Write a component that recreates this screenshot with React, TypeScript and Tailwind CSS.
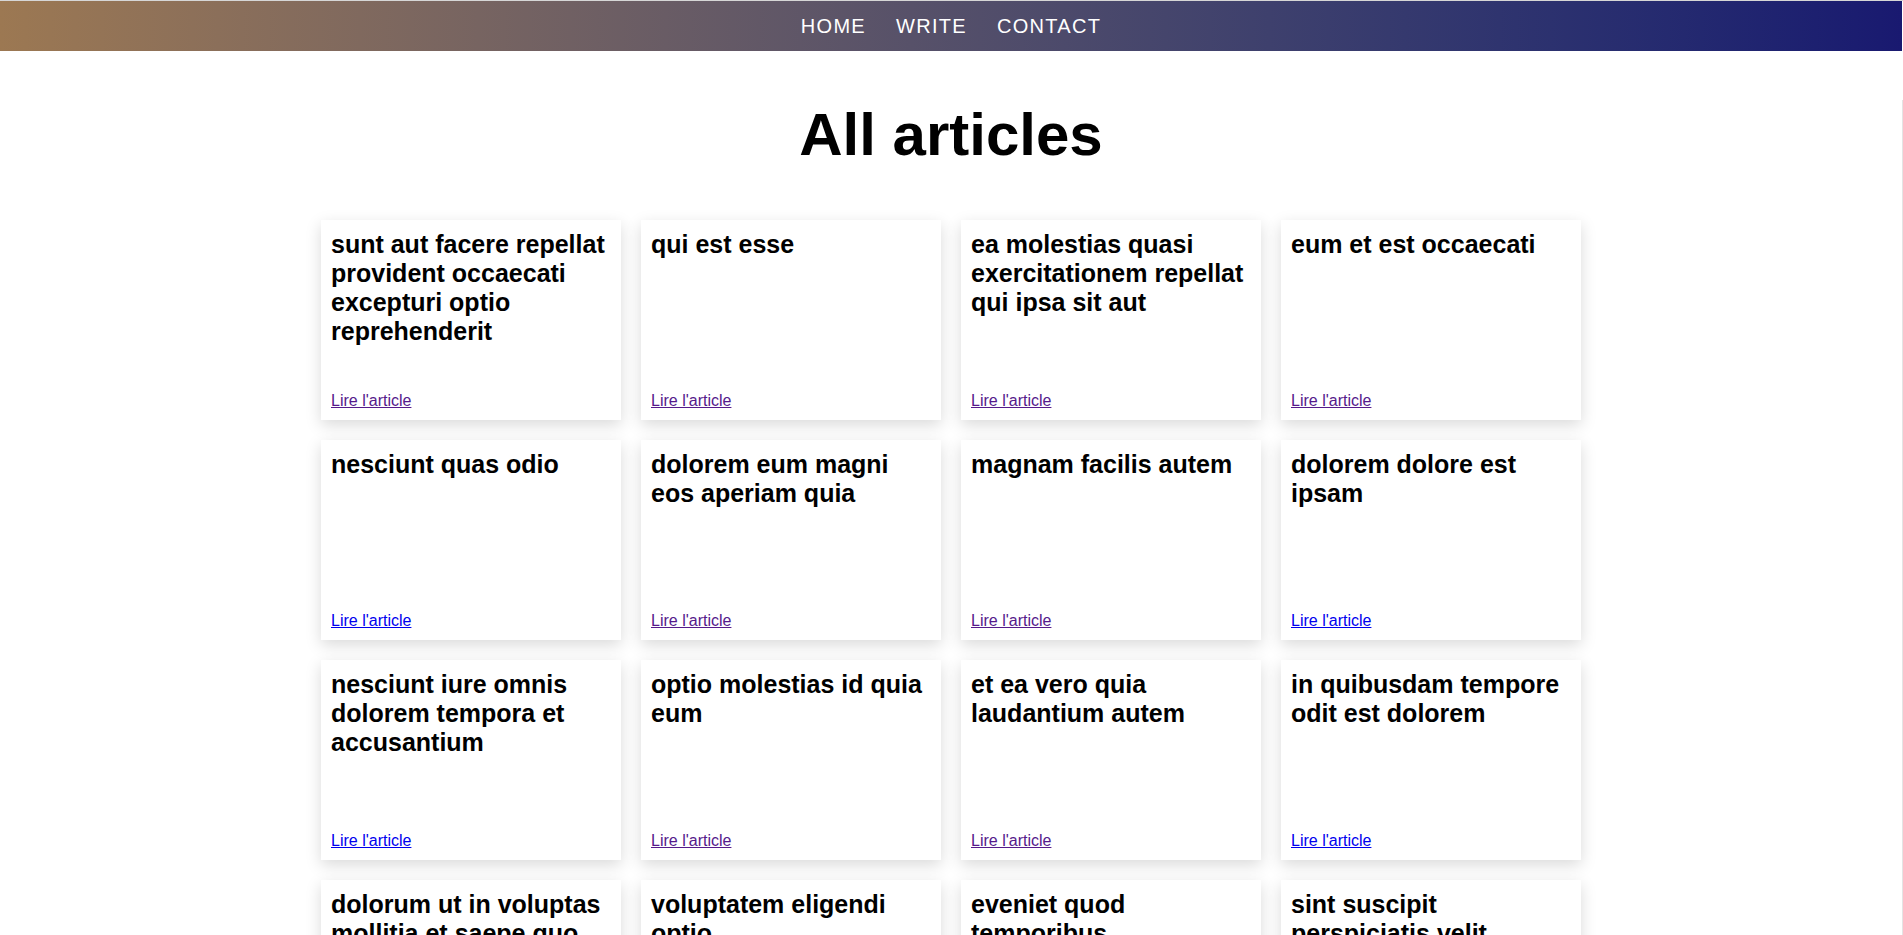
const navItems = ["HOME", "WRITE", "CONTACT"];

const posts = [
  "sunt aut facere repellat provident occaecati excepturi optio reprehenderit",
  "qui est esse",
  "ea molestias quasi exercitationem repellat qui ipsa sit aut",
  "eum et est occaecati",
  "nesciunt quas odio",
  "dolorem eum magni eos aperiam quia",
  "magnam facilis autem",
  "dolorem dolore est ipsam",
  "nesciunt iure omnis dolorem tempora et accusantium",
  "optio molestias id quia eum",
  "et ea vero quia laudantium autem",
  "in quibusdam tempore odit est dolorem",
  "dolorum ut in voluptas mollitia et saepe quo animi",
  "voluptatem eligendi optio",
  "eveniet quod temporibus",
  "sint suscipit perspiciatis velit dolorum rerum ipsa laboriosam odio",
  "fugit voluptas sed molestias voluptatem provident",
  "voluptate et itaque vero tempora molestiae",
  "adipisci placeat illum aut reiciendis qui",
  "doloribus ad provident suscipit at",
];

// links already visited show purple, like the browser does
const visited = new Set([0, 1, 2, 3, 5, 6, 9, 10, 13, 14, 17, 18]);

function ArticleCard({ title, index }: { title: string; index: number }) {
  return (
    <div className="w-[300px] h-[200px] p-[10px] bg-white flex flex-col justify-between shadow-[0_5px_15px_rgba(0,0,0,0.15)]">
      <h2 className="m-0 text-[25px] leading-[29px] font-bold text-black">{title}</h2>
      <a
        href="#"
        className={
          visited.has(index)
            ? "text-[16px] leading-[18px] underline text-[#551a8b]"
            : "text-[16px] leading-[18px] underline text-[#0000ee]"
        }
      >
        Lire l'article
      </a>
    </div>
  );
}

export default function App() {
  return (
    <div
      className="min-h-screen bg-white border-t border-[#d6d6d6]"
      style={{ fontFamily: '"Liberation Sans", Arial, sans-serif' }}
    >
      <nav className="h-[50px] mr-px flex items-center justify-center gap-[30px] bg-gradient-to-r from-[#9c7852] to-[#191970]">
        {navItems.map((item) => (
          <a key={item} href="#" className="text-white text-[20px] tracking-[1.3px]">
            {item}
          </a>
        ))}
      </nav>

      <main className="border-r border-[#e4e4e4] pb-10">
        <h1 className="mt-[49px] mb-[51px] text-center text-[60px] leading-[69px] font-bold text-black">
          All articles
        </h1>
        <div className="grid grid-cols-[repeat(4,300px)] gap-5 justify-center">
          {posts.map((title, i) => (
            <ArticleCard key={i} title={title} index={i} />
          ))}
        </div>
      </main>
    </div>
  );
}
